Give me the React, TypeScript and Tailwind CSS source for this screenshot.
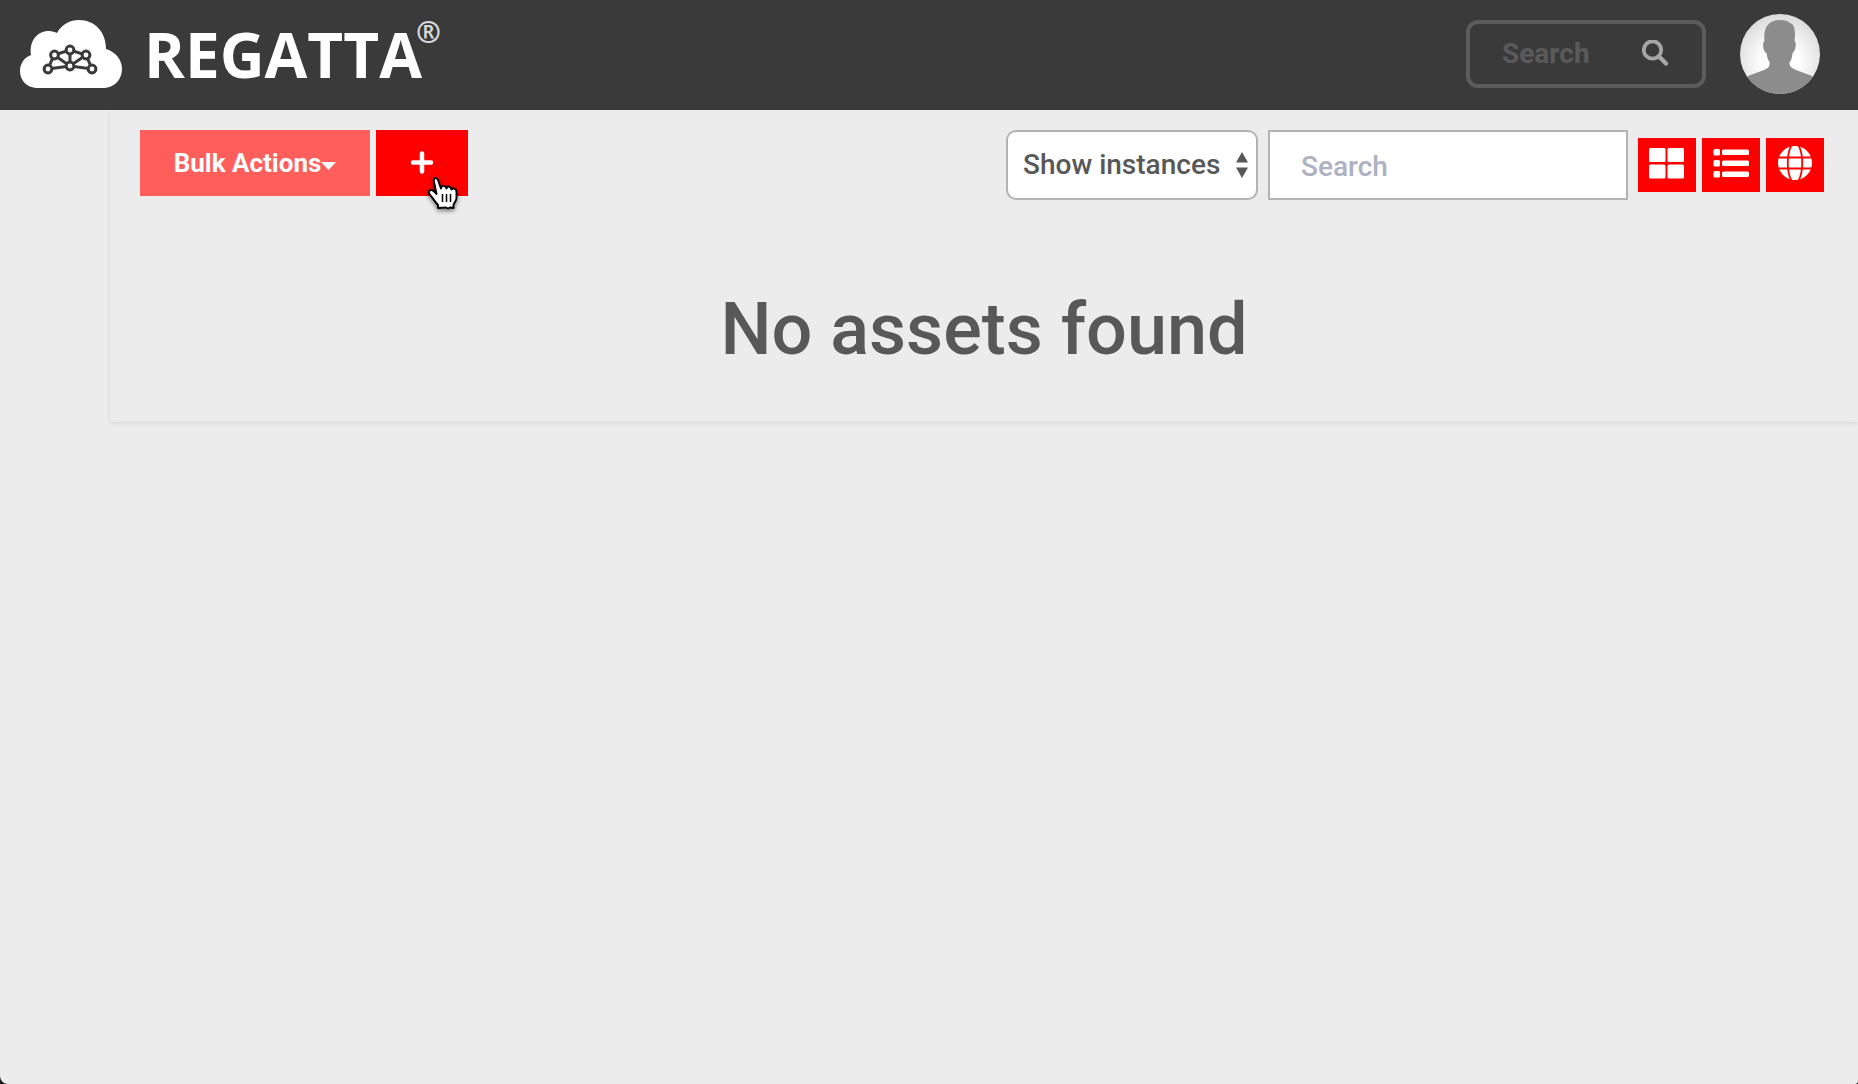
import React from "react";

function CloudLogo() {
  return (
    <svg width="102" height="68" viewBox="0 0 102 68" aria-hidden="true">
      <path
        d="M16 68C6 67 0 60 0 51C0 43 5 37 11 35C9 21 17 11 29 11C32 11 35 12 37 13C42 4 50 0 59 0C75 0 86 12 86 29C96 32 102 40 102 49C102 59 95 67 85 68Z"
        fill="#fff"
      />
      <g stroke="#3a3a3a" strokeWidth="3" fill="none">
        <path d="M28 49L34 35L50 30L66 35L72 49L50 46L28 49M34 35L50 46L66 35M50 30V46" />
      </g>
      <g stroke="#3a3a3a" strokeWidth="3" fill="#fff">
        <circle cx="28" cy="49" r="3.9" />
        <circle cx="34.500" cy="35" r="3.9" />
        <circle cx="50" cy="30" r="3.9" />
        <circle cx="66" cy="35" r="3.9" />
        <circle cx="72" cy="49" r="3.9" />
        <circle cx="50" cy="46" r="3.9" />
      </g>
    </svg>
  );
}

function Avatar() {
  return (
    <svg width="80" height="80" viewBox="0 0 80 80" aria-hidden="true">
      <defs>
        <radialGradient id="avatarGlow" cx="50%" cy="60%" r="58%">
          <stop offset="0.4" stopColor="#fff" />
          <stop offset="1" stopColor="#dcdcdc" />
        </radialGradient>
        <clipPath id="avatarClip">
          <circle cx="40" cy="40" r="40" />
        </clipPath>
      </defs>
      <g clipPath="url(#avatarClip)">
        <rect width="80" height="80" fill="url(#avatarGlow)" />
        <path
          d="M24.500 27C23 14 28 6 40 6C45 6 48 7 50 9C54 10 56 15 54.500 27C57 28 55.500 38 52.500 39C52 44 51 47 49.500 48C49 53 52 54 56 56L72 62L80 80H0L8 62L24 56C28 54 30 53 29.500 48C28 46 27 43 26.500 39C23 38 22 28 24.500 27Z"
          fill="#8c8c8c"
        />
      </g>
    </svg>
  );
}

function SearchIcon() {
  return (
    <svg width="28" height="28" viewBox="0 0 28 28" fill="none" stroke="#a6a6a6" aria-hidden="true">
      <circle cx="10.500" cy="10" r="8.700" strokeWidth="3.800" />
      <path d="M17.500 17L24 23.500" strokeWidth="4.400" strokeLinecap="round" />
    </svg>
  );
}

function GridIcon() {
  return (
    <svg width="36" height="36" viewBox="0 0 36 36" fill="#fff" aria-hidden="true">
      <rect x="0" y="2" width="16.500" height="14" rx="1.500" />
      <rect x="18.500" y="2" width="16.500" height="14" rx="1.500" />
      <rect x="0" y="18.500" width="16.500" height="14" rx="1.500" />
      <rect x="18.500" y="18.500" width="16.500" height="14" rx="1.500" />
    </svg>
  );
}

function ListIcon() {
  return (
    <svg width="36" height="36" viewBox="0 0 36 36" fill="#fff" aria-hidden="true">
      {[3, 14, 25].map((y) => (
        <g key={y}>
          <rect x="0.500" y={y} width="6.500" height="6.500" rx="1.500" />
          <rect x="9" y={y + 0.5} width="27" height="5.500" rx="1.500" />
        </g>
      ))}
    </svg>
  );
}

function GlobeIcon() {
  return (
    <svg width="36" height="36" viewBox="0 0 36 36" aria-hidden="true">
      <circle cx="18" cy="17" r="17" fill="#fff" />
      <g stroke="#f00" strokeWidth="1.800" fill="none">
        <path d="M0 11.500H36M0 22.500H36" />
        <path d="M14.500 -1C9.500 9 9.500 25 14.500 35M21.500 -1C26.500 9 26.500 25 21.500 35" />
      </g>
    </svg>
  );
}

function HandPointer() {
  return (
    <svg
      className="pointer-events-none absolute left-[51px] top-[46px] drop-shadow-[0_2px_2px_rgba(0,0,0,0.5)]"
      width="32"
      height="34"
      viewBox="0 0 32 34"
      aria-hidden="true"
    >
      <path
        d="M11 32V29C8 26 6 22 3.500 19.500C1 17 1.500 14.500 3.500 14C6 13.500 8 16 9.500 18L7 6C6 1.500 9.500 0.500 11 4L14 12.500C14 9 19 9 19.500 12.500C20 9.500 24 10 24.500 13.500C26 11.500 29.500 12.500 29.500 16V22C29.500 25 27 27 26.500 29V32L23 31.500L21 32.500L19 31.500Z"
        fill="#fff"
        stroke="#000"
        strokeWidth="1.900"
        strokeLinejoin="round"
      />
      <path d="M15.500 18V26M19.500 18V26M23.500 18V26" stroke="#000" strokeWidth="1.500" />
    </svg>
  );
}

function ViewButton({ label, children }: { label: string; children: React.ReactNode }) {
  return (
    <button
      type="button"
      aria-label={label}
      className="flex h-[54px] w-[58px] items-start justify-center bg-[#ff0000] pt-2"
    >
      {children}
    </button>
  );
}

export default function App() {
  return (
    <div className="min-h-screen bg-[#1c1c1c] font-['Roboto',sans-serif] text-[#585858]">
      <div className="flex min-h-screen flex-col overflow-hidden rounded-bl-[8px] rounded-br-[3px] bg-[#ececec]">
        <header className="relative flex h-[110px] items-center justify-between bg-[#3a3a3a] pb-0.5 pl-5 pr-[38px]">
          <a href="#" className="flex items-center text-white">
            <CloudLogo />
            <span className="ml-[22px] font-['Open_Sans',sans-serif] text-[62px] font-bold leading-[64px]">
              REGATTA
            </span>
            <span className="mb-11 -ml-1.5 font-['Open_Sans',sans-serif] text-[30px] font-bold leading-none text-[#d8d8d8]">
              ®
            </span>
          </a>
          <div className="flex items-center gap-[34px]">
            <label className="flex h-[68px] w-[240px] items-center rounded-xl border-4 border-[#5c5c5c] px-8">
              <input
                type="text"
                aria-label="Search site"
                placeholder="Search"
                className="min-w-0 flex-1 bg-transparent text-[28px] font-bold text-white outline-none placeholder:text-[#5a5a5a]"
              />
              <SearchIcon />
            </label>
            <button type="button" aria-label="Account" className="rounded-full">
              <Avatar />
            </button>
          </div>
        </header>

        <main className="ml-[110px] flex flex-col px-[30px] pb-[52px] pt-5 shadow-[0_1px_4px_rgba(0,0,0,0.1)]">
          <div className="flex items-start justify-between">
            <div className="flex gap-1.5">
              <button
                type="button"
                className="flex h-[66px] w-[230px] items-center justify-center bg-[#ff5e5b] text-[26px] font-bold text-white"
              >
                Bulk Actions
                <svg className="mt-1.5" width="15" height="8" viewBox="0 0 15 8" fill="#fff" aria-hidden="true">
                  <path d="M0 0H15L7.500 8Z" />
                </svg>
              </button>
              <button
                type="button"
                aria-label="Add asset"
                className="relative flex h-[66px] w-[92px] items-center justify-center bg-[#ff0000]"
              >
                <svg width="24" height="24" viewBox="0 0 24 24" stroke="#fff" strokeWidth="4.500" strokeLinecap="round" aria-hidden="true">
                  <path d="M12 2.500V20.500M3 11.500H21" />
                </svg>
                <HandPointer />
              </button>
            </div>

            <div className="mr-1 flex items-center gap-2.5">
              <div className="relative">
                <select
                  aria-label="Show"
                  className="h-[70px] w-[252px] appearance-none rounded-[10px] border-2 border-[#b3b3b3] bg-white pl-[15px] text-[28px] font-medium"
                >
                  <option>Show instances</option>
                </select>
                <svg
                  className="pointer-events-none absolute right-2.5 top-[22px]"
                  width="12"
                  height="26"
                  viewBox="0 0 12 26"
                  fill="#585858"
                  aria-hidden="true"
                >
                  <path d="M0 10.500L6 0L12 10.500ZM0 15.500L6 26L12 15.500Z" />
                </svg>
              </div>
              <input
                type="search"
                aria-label="Search assets"
                placeholder="Search"
                className="h-[70px] w-[360px] border-2 border-[#b3b3b3] bg-white px-[31px] pt-0.5 text-[28px] font-medium outline-none placeholder:text-[#adb1c2]"
              />
              <div className="flex gap-1.5">
                <ViewButton label="Grid view">
                  <GridIcon />
                </ViewButton>
                <ViewButton label="List view">
                  <ListIcon />
                </ViewButton>
                <ViewButton label="Map view">
                  <GlobeIcon />
                </ViewButton>
              </div>
            </div>
          </div>
          <h1 className="mt-[90px] text-center text-[72px] font-medium leading-[80px]">No assets found</h1>
        </main>
      </div>
    </div>
  );
}
